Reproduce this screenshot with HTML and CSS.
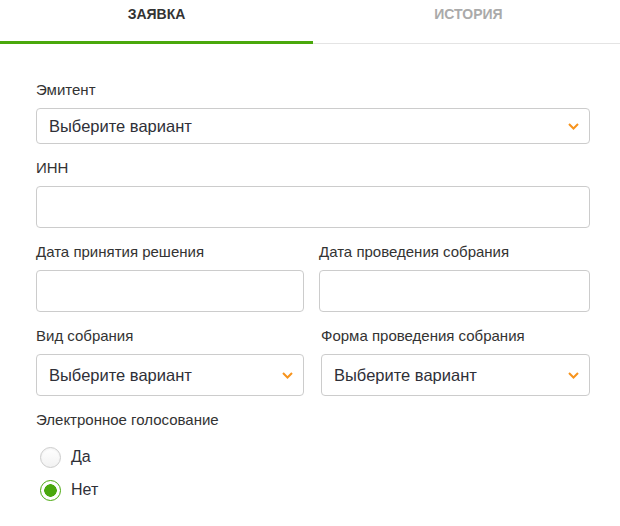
FILE: index.html
```
<!DOCTYPE html>
<html lang="ru">
<head>
    <meta charset="UTF-8">
    <meta name="viewport" content="width=device-width, initial-scale=1.0">
    <title>Заявка</title>
    <link rel="stylesheet" href="styles.css">
</head>
<body>

    <nav class="tabs">
        <div class="tab active">ЗАЯВКА</div>
        <div class="tab">ИСТОРИЯ</div>
    </nav>

    <form class="form">
        <div class="field">
            <label class="label">Эмитент</label>
            <div class="select short">
                <span>Выберите вариант</span>
                <svg class="chevron" width="11" height="7" viewBox="0 0 11 7"><path d="M1 1l4.5 4.5L10 1" fill="none" stroke="#f7941d" stroke-width="2"/></svg>
            </div>
        </div>

        <div class="field">
            <label class="label">ИНН</label>
            <div class="input"></div>
        </div>

        <div class="row">
            <div class="field">
                <label class="label">Дата принятия решения</label>
                <div class="input"></div>
            </div>
            <div class="field">
                <label class="label">Дата проведения собрания</label>
                <div class="input"></div>
            </div>
        </div>

        <div class="row">
            <div class="field">
                <label class="label">Вид собрания</label>
                <div class="select">
                    <span>Выберите вариант</span>
                    <svg class="chevron" width="11" height="7" viewBox="0 0 11 7"><path d="M1 1l4.5 4.5L10 1" fill="none" stroke="#f7941d" stroke-width="2"/></svg>
                </div>
            </div>
            <div class="field shifted">
                <label class="label">Форма проведения собрания</label>
                <div class="select">
                    <span>Выберите вариант</span>
                    <svg class="chevron" width="11" height="7" viewBox="0 0 11 7"><path d="M1 1l4.5 4.5L10 1" fill="none" stroke="#f7941d" stroke-width="2"/></svg>
                </div>
            </div>
        </div>

        <div class="field">
            <label class="label">Электронное голосование</label>
            <div class="radios">
                <div class="radio-row"><span class="radio"></span>Да</div>
                <div class="radio-row"><span class="radio checked"></span>Нет</div>
            </div>
        </div>
    </form>

</body>
</html>
```

FILE: styles.css
```
body {
    margin: 0;
    font-family: "Liberation Sans", Arial, sans-serif;
    color: #333;
    background: #fff;
}
.tabs {
    display: flex;
    border-bottom: 1px solid #e4e4e4;
}
.tab {
    flex: 1;
    position: relative;
    text-align: center;
    font-size: 14px;
    font-weight: bold;
    line-height: 16px;
    padding: 6px 0 21px 4px;
    color: #aaa;
}
.tab.active {
    flex: 0 0 313px;
    padding-left: 0;
    color: #333;
}
.tab.active::after {
    content: "";
    position: absolute;
    left: 0;
    right: 0;
    bottom: -1px;
    height: 3px;
    background: #4aa80c;
}
.form {
    padding: 36px 30px 20px 36px;
}
.field {
    margin-bottom: 14px;
}
.label {
    display: block;
    font-size: 15px;
    line-height: 20px;
    margin-bottom: 8px;
    color: #333;
}
.input,
.select {
    box-sizing: border-box;
    height: 42px;
    border: 1px solid #ccc;
    border-radius: 4px;
    background: #fff;
}
.select {
    display: flex;
    align-items: center;
    justify-content: space-between;
    padding: 0 10px 0 12px;
    font-size: 16.5px;
    color: #2f3038;
}
.select.short {
    height: 36px;
}
.row {
    display: grid;
    grid-template-columns: 268px 1fr;
    column-gap: 15px;
}
.row .field {
    margin-bottom: 14px;
}
.shifted {
    margin-left: 2px;
}
.radios {
    padding: 9px 0 0 4px;
}
.radio-row {
    display: flex;
    align-items: center;
    gap: 10px;
    font-size: 16px;
    color: #2f3038;
    height: 20px;
    margin-bottom: 13px;
}
.radio {
    box-sizing: border-box;
    width: 21px;
    height: 21px;
    border-radius: 50%;
    border: 1px solid #ccc;
    background: linear-gradient(#fff, #f2f2f2);
    box-shadow: inset 0 1px 2px rgba(0, 0, 0, 0.06);
}
.radio.checked {
    border-color: #4aa80c;
    background: radial-gradient(circle, #4aa80c 0, #4aa80c 6px, #fff 6.5px);
    box-shadow: none;
}
```
